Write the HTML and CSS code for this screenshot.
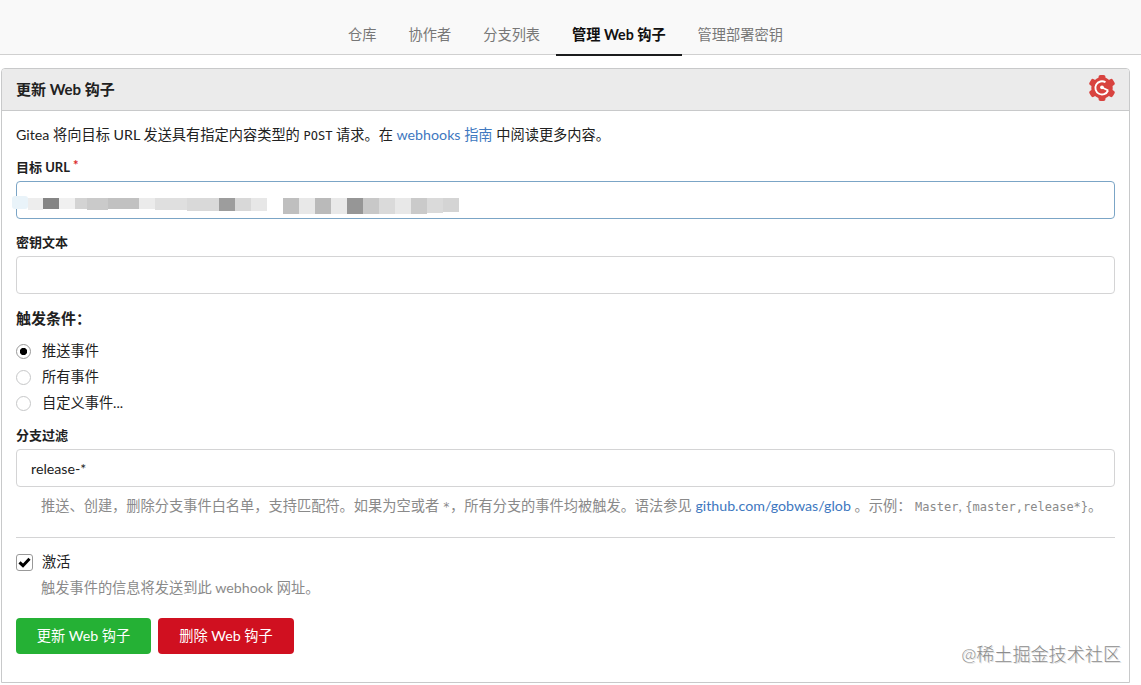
FILE: index.html
```html
<!DOCTYPE html>
<html lang="zh-CN">
<head>
    <meta charset="UTF-8">
    <meta name="viewport" content="width=device-width, initial-scale=1.0">
    <title>更新 Web 钩子</title>
    <link rel="stylesheet" href="styles.css">
</head>
<body>
    <nav class="tabs">
        <a class="tab">仓库</a>
        <a class="tab">协作者</a>
        <a class="tab">分支列表</a>
        <a class="tab active">管理 Web 钩子</a>
        <a class="tab">管理部署密钥</a>
    </nav>

    <div class="panel">
        <div class="panel-header">
            <h4>更新 Web 钩子</h4>
            <svg class="logo" width="26" height="26" viewBox="0 0 26 26">
                <g fill="#d8433f">
                    <circle cx="13" cy="13" r="10.700"/>
                    <rect x="9.500" y="0" width="7" height="26" rx="2"/>
                    <rect x="9.500" y="-0.500" width="7" height="27" rx="2" transform="rotate(60 13 13)"/>
                    <rect x="9.500" y="-0.500" width="7" height="27" rx="2" transform="rotate(120 13 13)"/>
                </g>
                <path d="M16.500 7.300A6.600 6.600 0 1 0 19 15.500M13 12.500l6.300 3" fill="none" stroke="#fff" stroke-width="1.900"/>
                <circle cx="13" cy="12.300" r="1.900" fill="#fff"/>
            </svg>
        </div>

        <form class="panel-body">
            <p class="intro">Gitea 将向目标 URL 发送具有指定内容类型的 <code>POST</code> 请求。在 <a href="#">webhooks 指南</a> 中阅读更多内容。</p>

            <label class="label">目标 URL<span class="required">*</span></label>
            <div class="field">
                <input class="input focused" type="text">
                <!-- blurred address -->
                <svg class="mosaic" width="450" height="20" viewBox="0 0 450 20">
                    <rect x="0" y="1" width="16" height="13" rx="3" fill="#e9f3f9"/>
                    <rect x="16" y="3" width="15" height="12" fill="#ededed"/>
                    <rect x="31" y="3" width="16" height="11" fill="#858585"/>
                    <rect x="47" y="3" width="16" height="11" fill="#f0f0f0"/>
                    <rect x="63" y="3" width="12" height="11" fill="#d3d3d3"/>
                    <rect x="75" y="3" width="21" height="12" fill="#cacaca"/>
                    <rect x="96" y="3" width="31" height="11" fill="#c1c1c1"/>
                    <rect x="127" y="3" width="16" height="11" fill="#ebebeb"/>
                    <rect x="143" y="3" width="32" height="12" fill="#dfdfdf"/>
                    <rect x="175" y="3" width="32" height="13" fill="#d9d9d9"/>
                    <rect x="207" y="3" width="16" height="13" fill="#9d9d9d"/>
                    <rect x="223" y="3" width="16" height="13" fill="#d8d8d8"/>
                    <rect x="239" y="3" width="16" height="13" fill="#e7e7e7"/>
                    <rect x="271" y="3" width="16" height="16" fill="#bfbfbf"/>
                    <rect x="287" y="3" width="16" height="16" fill="#e8e8e8"/>
                    <rect x="303" y="3" width="16" height="16" fill="#bababa"/>
                    <rect x="319" y="3" width="16" height="16" fill="#e9e9e9"/>
                    <rect x="335" y="3" width="16" height="16" fill="#969696"/>
                    <rect x="351" y="3" width="16" height="16" fill="#c8c8c8"/>
                    <rect x="367" y="3" width="16" height="16" fill="#dadada"/>
                    <rect x="383" y="3" width="16" height="16" fill="#e8e8e8"/>
                    <rect x="399" y="3" width="16" height="16" fill="#cacaca"/>
                    <rect x="415" y="3" width="16" height="15" fill="#dadada"/>
                    <rect x="431" y="3" width="16" height="14" fill="#d4d4d4"/>
                </svg>
            </div>

            <label class="label">密钥文本</label>
            <div class="field">
                <input class="input" type="text">
            </div>

            <h4 class="events-title">触发条件：</h4>
            <label class="choice"><span class="radio checked"></span>推送事件</label>
            <label class="choice"><span class="radio"></span>所有事件</label>
            <label class="choice"><span class="radio"></span>自定义事件...</label>

            <label class="label branch">分支过滤</label>
            <div class="field">
                <input class="input" type="text" value="release-*">
            </div>
            <p class="help filter-help">推送、创建，删除分支事件白名单，支持匹配符。如果为空或者 <code>*</code>，所有分支的事件均被触发。语法参见 <a href="#">github.com/gobwas/glob</a> 。示例： <code>Master</code>, <code>{master,release*}</code>。</p>

            <div class="divider"></div>

            <label class="choice">
                <span class="checkbox">
                    <svg width="13" height="11" viewBox="0 0 13 11"><path d="M1.500 5.300 5 8.700l6.500-6.900" fill="none" stroke="#000" stroke-width="3"/></svg>
                </span>激活
            </label>
            <p class="help active-help">触发事件的信息将发送到此 webhook 网址。</p>

            <div class="actions">
                <button class="button green" type="button">更新 Web 钩子</button>
                <button class="button red" type="button">删除 Web 钩子</button>
            </div>
        </form>
        <span class="watermark">@稀土掘金技术社区</span>
    </div>
</body>
</html>
```
FILE: styles.css
```css
* {
    box-sizing: border-box;
}
body {
    margin: 0;
    height: 685px;
    overflow: hidden;
    background: #fff;
    color: #212121;
    font-family: Lato, "Noto Sans CJK SC", sans-serif;
    font-size: 14.22px;
    line-height: 20px;
}
h4, p {
    margin: 0;
}
a {
    color: #4078c0;
    text-decoration: none;
}
code {
    font-family: "DejaVu Sans Mono", monospace;
    font-size: 12px;
    line-height: 1;
}

/* Top tabs */
.tabs {
    display: flex;
    justify-content: center;
    align-items: flex-end;
    height: 55px;
    padding-right: 10px;
    background: #f9f9f9;
    border-bottom: 1px solid #d0d0d0;
}
.tab {
    height: 41px;
    margin-bottom: -2px;
    padding: 10px 16px 0;
    border-bottom: 2px solid transparent;
    color: #777;
    white-space: nowrap;
}
.tab.active {
    border-color: #1b1c1d;
    color: #111;
    font-weight: 700;
}

/* Panel */
.panel {
    position: relative;
    width: 1129px;
    height: 615px;
    margin: 13px 0 0 1px;
    border: 1px solid #c8c9ca;
    border-radius: 4px 4px 0 0;
}
.panel-header {
    display: flex;
    justify-content: space-between;
    align-items: center;
    height: 42px;
    padding: 0 14px;
    background: #ebebeb;
    border-bottom: 1px solid #c8c9ca;
    border-radius: 3px 3px 0 0;
}
.panel-header h4 {
    margin-bottom: 2px;
    font-size: 15px;
}
.logo {
    margin-bottom: 3px;
}
.panel-body {
    padding: 14px;
}

/* Form */
.intro {
    margin-bottom: 13px;
    white-space: nowrap;
}
.label {
    display: block;
    height: 18px;
    margin-bottom: 5px;
    font-size: 13px;
    font-weight: 700;
    line-height: 18px;
}
.required {
    margin-left: 3px;
    color: #db2828;
    vertical-align: 2px;
    line-height: 1;
}
.field {
    position: relative;
    height: 38px;
    margin-bottom: 14px;
}
.input {
    display: block;
    width: 100%;
    height: 38px;
    padding: 0 14px;
    border: 1px solid #d4d4d5;
    border-radius: 4px;
    outline: none;
    background: #fff;
    color: #212121;
    font: inherit;
}
.input.focused {
    border-color: #7ba5c6;
}
.mosaic {
    position: absolute;
    left: -4px;
    top: 14px;
}
.events-title {
    margin: -1px 0 9px;
    font-size: 15px;
    line-height: 22px;
}
.choice {
    display: flex;
    align-items: center;
    height: 26px;
}
.radio {
    width: 15px;
    height: 15px;
    margin-right: 11px;
    border: 1px solid #c6c7c8;
    border-radius: 50%;
}
.radio.checked {
    border-color: #999;
    background: radial-gradient(circle, #000 3.3px, transparent 4px);
}
.branch {
    margin-top: 10px;
}
.help {
    padding-left: 25px;
    color: #8a8a8a;
    white-space: nowrap;
}
.filter-help {
    margin-top: -5px;
}
.divider {
    margin: 21px 0 11px;
    border-top: 1px solid #d4d4d5;
}
.checkbox {
    display: flex;
    justify-content: center;
    align-items: center;
    width: 17px;
    height: 17px;
    margin-right: 9px;
    border: 1px solid #999;
    border-radius: 3px;
}
.active-help {
    margin-top: 3px;
}
.actions {
    display: flex;
    gap: 7px;
    margin-top: 20px;
}
.button {
    width: 135px;
    height: 36px;
    padding: 0;
    border: 0;
    border-radius: 4px;
    color: #fff;
    font: inherit;
}
.green {
    background: #25b135;
}
.red {
    width: 136px;
    background: #d01020;
}
.watermark {
    position: absolute;
    right: 8px;
    bottom: 16px;
    color: #8c8c8c;
    font-size: 18.1px;
    font-weight: 300;
    line-height: 24px;
    text-shadow: 1px 1px 0 #ddd;
}
```
